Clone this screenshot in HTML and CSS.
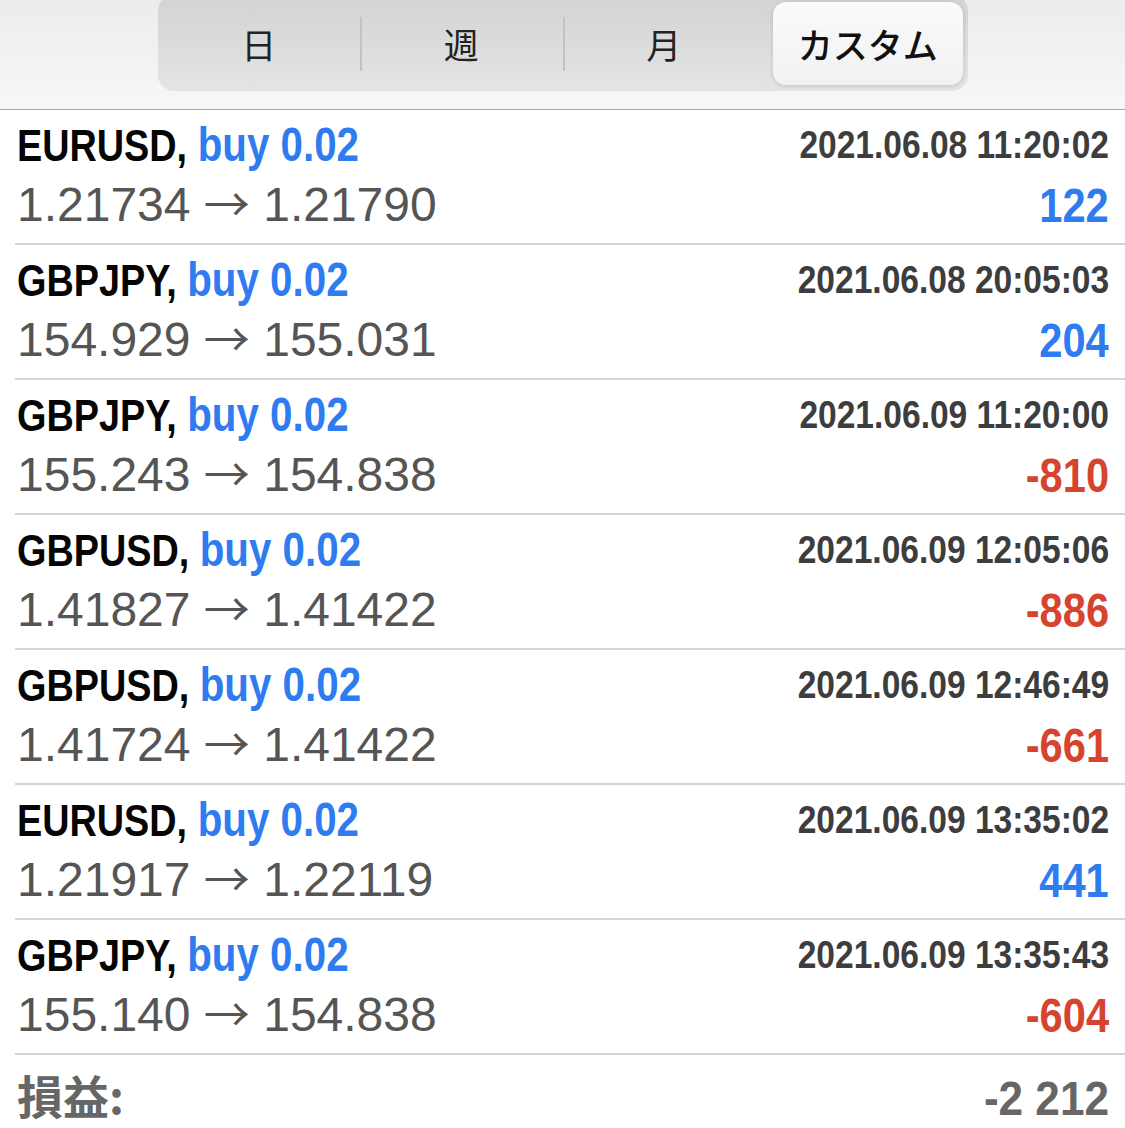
FILE: index.html
```html
<!DOCTYPE html>
<html>
<head>
    <meta charset="utf-8">
    <title>履歴</title>
    <link rel="stylesheet" href="styles.css">
</head>
<body>
    <div class="toolbar">
        <div class="segmented">
            <span class="seg">日</span>
            <span class="seg">週</span>
            <span class="seg">月</span>
            <span class="seg active">カスタム</span>
        </div>
    </div>

    <ul class="deals">
        <li class="deal">
            <div class="line head">
                <span class="title"><span class="sym">EURUSD,</span> <span class="side">buy 0.02</span></span>
                <span class="time">2021.06.08 11:20:02</span>
            </div>
            <div class="line body">
                <span class="price">1.21734 <span class="arrow">→</span> 1.21790</span>
                <span class="profit up">122</span>
            </div>
        </li>
        <li class="deal">
            <div class="line head">
                <span class="title"><span class="sym">GBPJPY,</span> <span class="side">buy 0.02</span></span>
                <span class="time">2021.06.08 20:05:03</span>
            </div>
            <div class="line body">
                <span class="price">154.929 <span class="arrow">→</span> 155.031</span>
                <span class="profit up">204</span>
            </div>
        </li>
        <li class="deal">
            <div class="line head">
                <span class="title"><span class="sym">GBPJPY,</span> <span class="side">buy 0.02</span></span>
                <span class="time">2021.06.09 11:20:00</span>
            </div>
            <div class="line body">
                <span class="price">155.243 <span class="arrow">→</span> 154.838</span>
                <span class="profit down">-810</span>
            </div>
        </li>
        <li class="deal">
            <div class="line head">
                <span class="title"><span class="sym">GBPUSD,</span> <span class="side">buy 0.02</span></span>
                <span class="time">2021.06.09 12:05:06</span>
            </div>
            <div class="line body">
                <span class="price">1.41827 <span class="arrow">→</span> 1.41422</span>
                <span class="profit down">-886</span>
            </div>
        </li>
        <li class="deal">
            <div class="line head">
                <span class="title"><span class="sym">GBPUSD,</span> <span class="side">buy 0.02</span></span>
                <span class="time">2021.06.09 12:46:49</span>
            </div>
            <div class="line body">
                <span class="price">1.41724 <span class="arrow">→</span> 1.41422</span>
                <span class="profit down">-661</span>
            </div>
        </li>
        <li class="deal">
            <div class="line head">
                <span class="title"><span class="sym">EURUSD,</span> <span class="side">buy 0.02</span></span>
                <span class="time">2021.06.09 13:35:02</span>
            </div>
            <div class="line body">
                <span class="price">1.21917 <span class="arrow">→</span> 1.22119</span>
                <span class="profit up">441</span>
            </div>
        </li>
        <li class="deal">
            <div class="line head">
                <span class="title"><span class="sym">GBPJPY,</span> <span class="side">buy 0.02</span></span>
                <span class="time">2021.06.09 13:35:43</span>
            </div>
            <div class="line body">
                <span class="price">155.140 <span class="arrow">→</span> 154.838</span>
                <span class="profit down">-604</span>
            </div>
        </li>
    </ul>

    <div class="total">
        <span class="total-label">損益:</span>
        <span class="total-value">-2 212</span>
    </div>
</body>
</html>
```

FILE: styles.css
```css
body {
    margin: 0;
    background: #ffffff;
    font-family: 'Liberation Sans', 'Noto Sans CJK JP', sans-serif;
    overflow: hidden;
}

/* top bar with period switch */
.toolbar {
    height: 109px;
    background: linear-gradient(#ececec, #f7f7f7);
    border-bottom: 1px solid #a9a9a9;
    display: flex;
    justify-content: center;
}

.segmented {
    width: 810px;
    height: 96px;
    margin-top: -5px;
    display: flex;
    background: linear-gradient(#d3d3d3, #e4e4e4);
    border-radius: 16px;
}

.seg {
    flex: 0 0 202.5px;
    display: flex;
    align-items: center;
    justify-content: center;
    font-family: 'Noto Sans CJK JP', sans-serif;
    font-size: 35px;
    color: #222;
    position: relative;
}

.seg + .seg::before {
    content: "";
    position: absolute;
    left: 0;
    top: 22px;
    bottom: 20px;
    border-left: 2px solid #c2c2c2;
}

.seg.active::before,
.seg.active + .seg::before {
    display: none;
}

.seg.active {
    flex: 1;
    margin: 7px 5px 6px 8px;
    background: linear-gradient(#fbfbfb, #f1f1f1);
    border-radius: 13px;
    box-shadow: 0 1px 4px rgba(0,0,0,0.16);
    color: #111;
    font-weight: 500;
}

/* deals list */
.deals {
    list-style: none;
    margin: 0;
    padding: 0 0 0 15px;
}

.deal {
    height: 135px;
    box-sizing: border-box;
    padding: 0 16px 0 2px;
    border-bottom: 2px solid #d4d4d4;
}

.line {
    display: flex;
    justify-content: space-between;
    align-items: center;
}

.head {
    height: 69px;
    line-height: 69px;
}

.body {
    height: 52px;
    line-height: 52px;
}

/* condensed look: scale bold text narrower */
.title,
.time,
.profit,
.total-value {
    display: inline-block;
    font-weight: bold;
}

.title {
    font-size: 45px;
    transform: scaleX(0.84);
    transform-origin: left center;
    white-space: nowrap;
}

.sym {
    color: #050505;
}

.side {
    font-size: 48px;
    color: #2f7cf0;
}

.time {
    font-size: 39px;
    color: #3d3d3d;
    transform: scaleX(0.86);
    transform-origin: right center;
}

.price {
    font-size: 48px;
    color: #555;
    white-space: nowrap;
}

.arrow {
    font-family: 'Noto Sans CJK JP', sans-serif;
    font-size: 46px;
    line-height: 0;
}

.profit {
    font-size: 49px;
    transform: scaleX(0.85);
    transform-origin: right center;
}

.up {
    color: #2f7cf0;
}

.down {
    color: #d6432f;
}

/* total line */
.total {
    height: 73px;
    box-sizing: border-box;
    padding: 4px 16px 0 17px;
    display: flex;
    justify-content: space-between;
    align-items: center;
    color: #666;
}

.total-label {
    font-family: 'Noto Sans CJK JP', sans-serif;
    font-weight: bold;
    font-size: 46px;
    line-height: 1;
}

.total-value {
    margin-top: 10px;
    font-size: 49px;
    line-height: 1;
    transform: scaleX(0.9);
    transform-origin: right center;
}
```
